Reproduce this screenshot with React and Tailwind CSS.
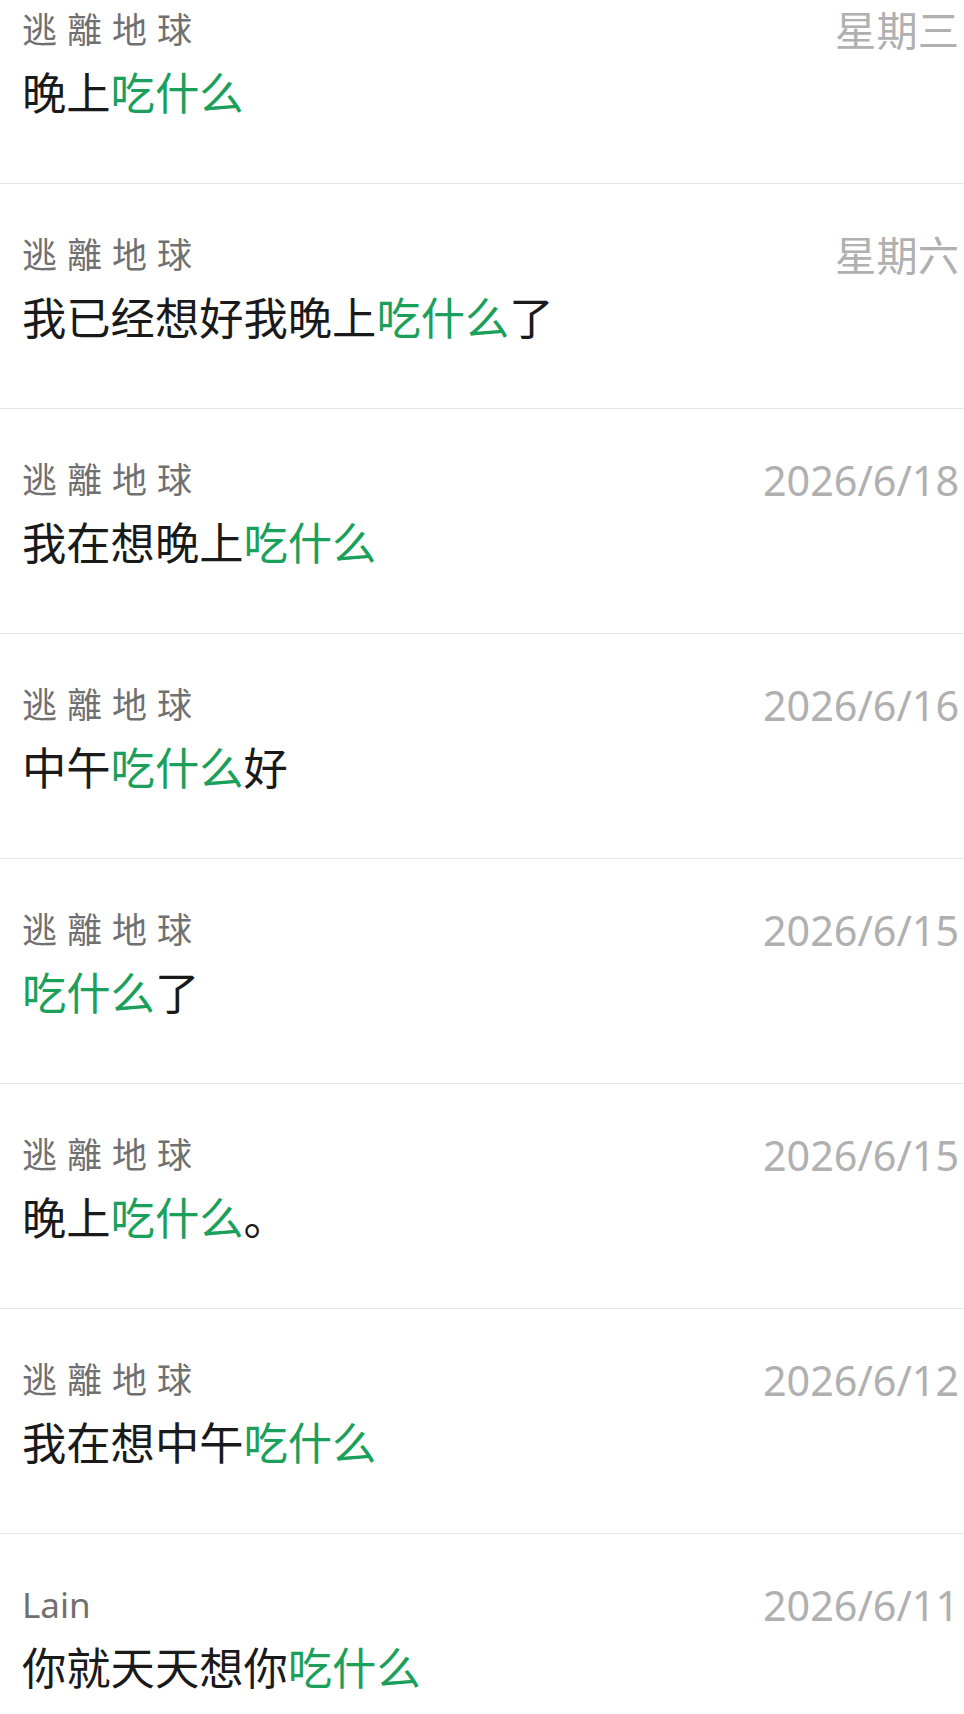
const rows = [
  { name: '逃離地球', date: '星期三', parts: ['晚上', '吃什么'] },
  { name: '逃離地球', date: '星期六', parts: ['我已经想好我晚上', '吃什么', '了'] },
  { name: '逃離地球', date: '2026/6/18', parts: ['我在想晚上', '吃什么'] },
  { name: '逃離地球', date: '2026/6/16', parts: ['中午', '吃什么', '好'] },
  { name: '逃離地球', date: '2026/6/15', parts: ['', '吃什么', '了'] },
  { name: '逃離地球', date: '2026/6/15', parts: ['晚上', '吃什么', '。'] },
  { name: '逃離地球', date: '2026/6/12', parts: ['我在想中午', '吃什么'] },
  { name: 'Lain', date: '2026/6/11', parts: ['你就天天想你', '吃什么'] },
];

const font = { fontFamily: '"Noto Sans", "Noto Sans CJK SC", sans-serif' };

const Row = ({ row, first }) => {
  const latin = /^[A-Za-z]/.test(row.name);
  return (
    <div className={`border-b border-[#e6e6e6] pl-[22px] pr-[5px] pb-[65px] ${first ? 'pt-[10px]' : 'pt-[51px]'}`}>
      <div className="flex items-center justify-between h-[40px]">
        <span className={`text-[35px] leading-[40px] text-[#707070] ${latin ? '' : 'tracking-[10px]'}`}>
          {row.name}
        </span>
        <span className="text-[41.3px] leading-[40px] text-[#b0b0b0]">{row.date}</span>
      </div>
      <div className="mt-[18px] text-[44.3px] leading-[50px] text-[#1a1a1a] whitespace-nowrap">
        {row.parts[0]}
        <span className="text-[#1aa05a]">{row.parts[1]}</span>
        {row.parts[2]}
      </div>
    </div>
  );
};

const App = () => {
  return (
    <div className="w-[964px] h-[1714px] overflow-hidden bg-white" style={font}>
      {rows.map((r, i) => (
        <Row key={i} row={r} first={i === 0} />
      ))}
    </div>
  );
};

export default App;
